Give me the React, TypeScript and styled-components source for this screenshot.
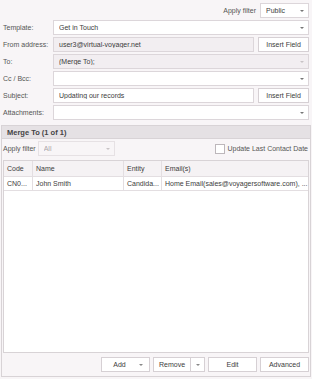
import styled, { createGlobalStyle } from "styled-components"

const Global = createGlobalStyle`
  html, body {
    margin: 0;
    padding: 0;
    background: #f8f5f7;
  }
  body {
    font-family: "Liberation Sans", Arial, sans-serif;
    font-size: 7px;
    color: #3c3c3c;
  }
`

const Page = styled.div`
  width: 312px;
  height: 379px;
  box-sizing: border-box;
  padding: 3px 3px 2px 3px;
  display: flex;
  flex-direction: column;
`

const FilterBar = styled.div`
  display: flex;
  justify-content: flex-end;
  align-items: center;
  gap: 4px;
  height: 15px;
`

const Label = styled.span`
  color: #555;
  white-space: nowrap;
`

const Box = styled.div<{ $w?: number; $muted?: boolean; $disabled?: boolean }>`
  ${p => (p.$w ? `width: ${p.$w}px;` : "flex: 1;")}
  height: 15px;
  box-sizing: border-box;
  border: 1px solid ${p => (p.$disabled ? "#e6e1e4" : "#dcd6da")};
  background: ${p => (p.$muted ? "#f2eef1" : p.$disabled ? "#f8f5f7" : "#fff")};
  color: ${p => (p.$disabled ? "#a9a4a7" : "#3c3c3c")};
  display: flex;
  align-items: center;
  padding: 0 4px 0 5px;
  white-space: nowrap;
  overflow: hidden;
`

const BoxText = styled.span`
  flex: 1;
  overflow: hidden;
  text-overflow: ellipsis;
`

const Arrow = styled.span<{ $faint?: boolean }>`
  width: 0;
  height: 0;
  border-left: 2px solid transparent;
  border-right: 2px solid transparent;
  border-top: 2px solid ${p => (p.$faint ? "#c8c3c6" : "#777")};
  margin-left: 4px;
  flex: none;
`

const Form = styled.div`
  display: grid;
  grid-template-columns: 50px 1fr;
  row-gap: 2px;
  align-items: center;
  margin-top: 2px;
`

const Line = styled.div`
  display: flex;
  gap: 4px;
`

const Button = styled.div<{ $w: number }>`
  width: ${p => p.$w}px;
  height: 15px;
  box-sizing: border-box;
  border: 1px solid #d6d0d4;
  background: #fff;
  display: flex;
  align-items: center;
  justify-content: center;
  color: #3c3c3c;
  position: relative;
`

const DropLabel = styled.span`
  margin-right: 12px;
`

const ButtonArrow = styled.span`
  position: absolute;
  right: 6px;
  top: 6px;
  border-left: 2px solid transparent;
  border-right: 2px solid transparent;
  border-top: 2px solid #888;
`

const Group = styled.div`
  flex: 1;
  margin: 5px -2px 0 -2px;
  border: 1px solid #d8d3d6;
  display: flex;
  flex-direction: column;
`

const GroupHeader = styled.div`
  height: 12px;
  background: #e5e1e4;
  border-bottom: 1px solid #d8d3d6;
  display: flex;
  align-items: center;
  padding-left: 5px;
  font-weight: bold;
  font-size: 7.5px;
  color: #444;
`

const GroupBody = styled.div`
  flex: 1;
  display: flex;
  flex-direction: column;
  padding: 2px 1px 4px 1px;
`

const GridFilter = styled.div`
  display: flex;
  align-items: center;
  gap: 2px;
  height: 15px;
`

const CheckWrap = styled.label`
  margin-left: auto;
  display: flex;
  align-items: center;
  gap: 2px;
  margin-right: 1px;
`

const Check = styled.span`
  width: 10px;
  height: 10px;
  box-sizing: border-box;
  border: 1px solid #bdb7bb;
  background: #fff;
`

const Grid = styled.div`
  flex: 1;
  margin-top: 4px;
  border: 1px solid #d8d3d6;
  background: #fff;
  display: flex;
  flex-direction: column;
`

const GridRow = styled.div<{ $head?: boolean }>`
  display: grid;
  grid-template-columns: 29px 91px 38px 1fr;
  height: ${p => (p.$head ? 15 : 13)}px;
  background: ${p => (p.$head ? "#f5f2f4" : "#fff")};
  border-bottom: 1px solid #e3dee1;
`

const Cell = styled.div`
  display: flex;
  align-items: center;
  padding: 0 3px;
  border-right: 1px solid #e3dee1;
  white-space: nowrap;
  overflow: hidden;
  min-width: 0;
  &:last-child {
    border-right: none;
  }
`

const Actions = styled.div`
  display: flex;
  justify-content: flex-end;
  gap: 3px;
  margin-top: 4px;
`

const Split = styled.div`
  display: flex;
`

const SplitArrow = styled.div`
  width: 14px;
  height: 15px;
  box-sizing: border-box;
  border: 1px solid #d6d0d4;
  border-left: none;
  background: #fff;
  display: flex;
  align-items: center;
  justify-content: center;
  &::after {
    content: "";
    border-left: 2px solid transparent;
    border-right: 2px solid transparent;
    border-top: 2px solid #888;
  }
`

const columns = ["Code", "Name", "Entity", "Email(s)"]
const row = ["CN0...", "John Smith", "Candida...", "Home Email(sales@voyagersoftware.com), ..."]

export default function App() {
  return (
    <>
      <Global />
      <Page>
        <FilterBar>
          <Label>Apply filter</Label>
          <Box $w={49}>
            <BoxText>Public</BoxText>
            <Arrow />
          </Box>
        </FilterBar>
        <Form>
          <Label>Template:</Label>
          <Box>
            <BoxText>Get in Touch</BoxText>
            <Arrow />
          </Box>
          <Label>From address:</Label>
          <Line>
            <Box $muted>
              <BoxText>user3@virtual-voyager.net</BoxText>
            </Box>
            <Button $w={51}>Insert Field</Button>
          </Line>
          <Label>To:</Label>
          <Box $muted>
            <BoxText>(Merge To);</BoxText>
            <Arrow $faint />
          </Box>
          <Label>Cc / Bcc:</Label>
          <Box>
            <BoxText />
            <Arrow />
          </Box>
          <Label>Subject:</Label>
          <Line>
            <Box>
              <BoxText>Updating our records</BoxText>
            </Box>
            <Button $w={51}>Insert Field</Button>
          </Line>
          <Label>Attachments:</Label>
          <Box>
            <BoxText />
            <Arrow />
          </Box>
        </Form>
        <Group>
          <GroupHeader>Merge To (1 of 1)</GroupHeader>
          <GroupBody>
            <GridFilter>
              <Label>Apply filter</Label>
              <Box $w={77} $disabled>
                <BoxText>All</BoxText>
                <Arrow $faint />
              </Box>
              <CheckWrap>
                <Check />
                <Label>Update Last Contact Date</Label>
              </CheckWrap>
            </GridFilter>
            <Grid>
              <GridRow $head>
                {columns.map(c => (
                  <Cell key={c}>{c}</Cell>
                ))}
              </GridRow>
              <GridRow>
                {row.map(c => (
                  <Cell key={c}>{c}</Cell>
                ))}
              </GridRow>
            </Grid>
            <Actions>
              <Button $w={49}>
                <DropLabel>Add</DropLabel>
                <ButtonArrow />
              </Button>
              <Split>
                <Button $w={38}>Remove</Button>
                <SplitArrow />
              </Split>
              <Button $w={49}>Edit</Button>
              <Button $w={49}>Advanced</Button>
            </Actions>
          </GroupBody>
        </Group>
      </Page>
    </>
  )
}
